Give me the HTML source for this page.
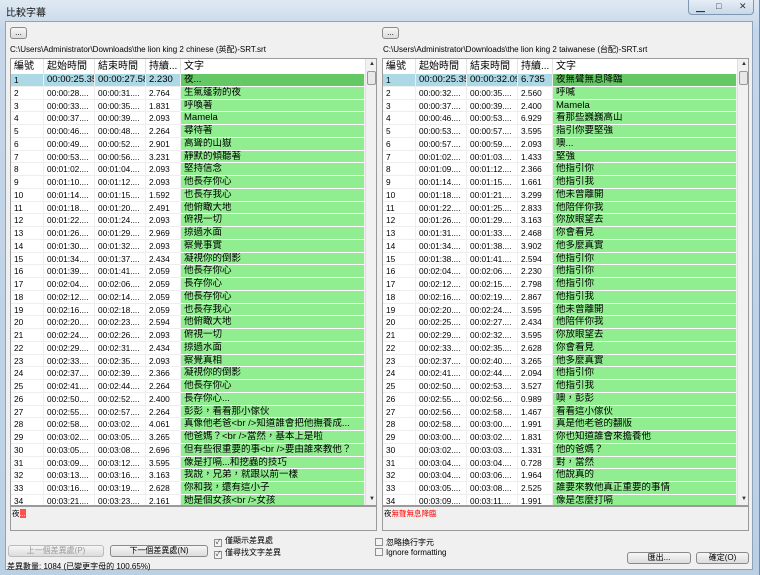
<!DOCTYPE html>
<html><head><meta charset="utf-8"><style>
*{box-sizing:border-box;margin:0;padding:0}
body{width:760px;height:575px;overflow:hidden;background:#9fb9d3;font-family:"Liberation Sans","Noto Sans CJK TC",sans-serif;position:relative}
.frame{position:absolute;left:0;top:0;width:760px;height:575px;background:linear-gradient(#dfe9f3,#c5d6e8 30px,#bcd0e4);border-right:1px solid #6b8db5}
.title{position:absolute;left:6px;top:4px;font-size:10px;color:#111}
.ctl{position:absolute;top:0;left:688px;width:66px;height:15px;border:1px solid #7f97b3;border-top:none;border-radius:0 0 4px 4px;background:linear-gradient(#e6eef7,#c9d8e8)}
.ctl span{position:absolute;top:1px;font-size:9px;color:#333}
.client{position:absolute;left:5px;top:21px;width:748px;height:549px;background:#f0f0f0;border:1px solid #8da2bb}
.btn{position:absolute;border:1px solid #8a8a8a;border-radius:3px;background:linear-gradient(#f6f6f6,#dcdcdc);font-size:8px;text-align:center;color:#000}
.path{position:absolute;font-size:8px;color:#000;white-space:nowrap}
.tbl{position:absolute;top:58px;height:448px;background:#fff;border:1px solid #9a9a9a;overflow:hidden}
.hdr{position:absolute;left:0;top:0;height:15px;font-size:10px;color:#000}
.hdr div{position:absolute;top:0;height:15px;line-height:15px;padding-left:3px;border-right:1px solid #e3e3e3}
.row{position:absolute;left:0;height:12.75px;font-size:8.3px;white-space:nowrap}
.row div{position:absolute;top:0;height:12.75px;line-height:12.75px;padding-left:3px;overflow:hidden;border-right:1px solid #eee;border-bottom:1px solid #eee}
.row .t{background:#90ee90;border-bottom:1px solid #fff;font-size:9.5px}
.row.sel div{background:#add8e6}
.row.sel .t{background:#64c864}
.sb{position:absolute;top:0;width:12px;height:446px;background:#f1f1f1;border-left:1px solid #e0e0e0}
.sb .th{position:absolute;left:1px;top:12px;width:9px;height:14px;border:1px solid #999;background:#e8e8e8;border-radius:2px}
.sb .a{position:absolute;left:3px;font-size:6px;color:#333}
.box{position:absolute;top:506px;height:25px;background:#f0f0f0;border:1px solid #9a9a9a;font-size:7.5px}
.chk{position:absolute;font-size:8px;white-space:nowrap}
.chk i{display:inline-block;width:8px;height:8px;border:1px solid #8e8f8f;background:#f4f4f4;vertical-align:-1px;margin-right:3px;font-style:normal;font-size:7px;line-height:6px;color:#333;text-align:center}
</style></head><body>
<div class="frame"></div>
<div class="title">比較字幕</div>
<div class="ctl"><span style="left:7px">▁</span><span style="left:27px">□</span><span style="left:50px">✕</span></div>
<div class="client"></div>
<div class="btn" style="left:10px;top:27px;width:17px;height:12px;line-height:9px">...</div>
<div class="btn" style="left:382px;top:27px;width:17px;height:12px;line-height:9px">...</div>
<div class="path" style="left:10px;top:44px">C:\Users\Administrator\Downloads\the lion king 2 chinese (英配)-SRT.srt</div>
<div class="path" style="left:383px;top:44px">C:\Users\Administrator\Downloads\the lion king 2 taiwanese (台配)-SRT.srt</div>

<div class="tbl" style="left:10px;width:367px">
<div class="hdr"><div style="left:0;width:33px">編號</div><div style="left:33px;width:51px">起始時間</div><div style="left:84px;width:51px">結束時間</div><div style="left:135px;width:35px">持續...</div><div style="left:170px;width:185px">文字</div></div>
<div id="L"></div>
<div class="sb" style="left:354px"><span class="a" style="top:2px">▲</span><div class="th"></div><span class="a" style="top:437px">▼</span></div>
</div>
<div class="tbl" style="left:382px;width:367px">
<div class="hdr"><div style="left:0;width:33px">編號</div><div style="left:33px;width:51px">起始時間</div><div style="left:84px;width:51px">結束時間</div><div style="left:135px;width:35px">持續...</div><div style="left:170px;width:185px">文字</div></div>
<div id="R"></div>
<div class="sb" style="left:354px"><span class="a" style="top:2px">▲</span><div class="th"></div><span class="a" style="top:437px">▼</span></div>
</div>

<div class="box" style="left:10px;width:367px"><span style="position:absolute;left:1px;top:1px">夜<span style="background:#ff5050;color:#fff">...</span></span></div>
<div class="box" style="left:382px;width:367px"><span style="position:absolute;left:1px;top:1px">夜<span style="color:#f00">無聲無息降臨</span></span></div>

<div class="chk" style="left:214px;top:535px"><i>✓</i>僅顯示差異處</div>
<div class="chk" style="left:214px;top:547px"><i>✓</i>僅尋找文字差異</div>
<div class="chk" style="left:375px;top:537px"><i></i>忽略換行字元</div>
<div class="chk" style="left:375px;top:548px"><i></i>Ignore formatting</div>
<div class="btn" style="left:8px;top:545px;width:96px;height:12px;line-height:10px;color:#999;border-color:#bbb">上一個差異處(P)</div>
<div class="btn" style="left:110px;top:545px;width:98px;height:12px;line-height:10px">下一個差異處(N)</div>
<div class="btn" style="left:627px;top:552px;width:64px;height:12px;line-height:10px">匯出...</div>
<div class="btn" style="left:696px;top:552px;width:53px;height:12px;line-height:10px">確定(O)</div>
<div class="path" style="left:7px;top:561px">差異數量: 1084 (已變更字母的 100.65%)</div>

<script>
var L=[["1","00:00:25.35","00:00:27.58","2.230","夜..."],["2","00:00:28....","00:00:31....","2.764","生氣蓬勃的夜"],["3","00:00:33....","00:00:35....","1.831","呼喚著"],["4","00:00:37....","00:00:39....","2.093","Mamela"],["5","00:00:46....","00:00:48....","2.264","尋待著"],["6","00:00:49....","00:00:52....","2.901","高聳的山嶽"],["7","00:00:53....","00:00:56....","3.231","靜默的傾聽著"],["8","00:01:02....","00:01:04....","2.093","堅持信念"],["9","00:01:10....","00:01:12....","2.093","他長存你心"],["10","00:01:14....","00:01:15....","1.592","也長存我心"],["11","00:01:18....","00:01:20....","2.491","他俯瞰大地"],["12","00:01:22....","00:01:24....","2.093","俯視一切"],["13","00:01:26....","00:01:29....","2.969","掠過水面"],["14","00:01:30....","00:01:32....","2.093","察覺事實"],["15","00:01:34....","00:01:37....","2.434","凝視你的倒影"],["16","00:01:39....","00:01:41....","2.059","他長存你心"],["17","00:02:04....","00:02:06....","2.059","長存你心"],["18","00:02:12....","00:02:14....","2.059","他長存你心"],["19","00:02:16....","00:02:18....","2.059","也長存我心"],["20","00:02:20....","00:02:23....","2.594","他俯瞰大地"],["21","00:02:24....","00:02:26....","2.093","俯視一切"],["22","00:02:29....","00:02:31....","2.434","掠過水面"],["23","00:02:33....","00:02:35....","2.093","察覺真相"],["24","00:02:37....","00:02:39....","2.366","凝視你的倒影"],["25","00:02:41....","00:02:44....","2.264","他長存你心"],["26","00:02:50....","00:02:52....","2.400","長存你心..."],["27","00:02:55....","00:02:57....","2.264","彭彭，看看那小傢伙"],["28","00:02:58....","00:03:02....","4.061","真像他老爸<br />知道誰會把他撫養成..."],["29","00:03:02....","00:03:05....","3.265","他爸媽？<br />當然，基本上是啦"],["30","00:03:05....","00:03:08....","2.696","但有些很重要的事<br />要由誰來教他？"],["31","00:03:09....","00:03:12....","3.595","像是打嗝...和挖蟲的技巧"],["32","00:03:13....","00:03:16....","3.163","我說，兄弟，就跟以前一樣"],["33","00:03:16....","00:03:19....","2.628","你和我，還有這小子"],["34","00:03:21....","00:03:23....","2.161","她是個女孩<br />女孩"]];
var R=[["1","00:00:25.35","00:00:32.09","6.735","夜無聲無息降臨"],["2","00:00:32....","00:00:35....","2.560","呼喊"],["3","00:00:37....","00:00:39....","2.400","Mamela"],["4","00:00:46....","00:00:53....","6.929","看那些巍巍高山"],["5","00:00:53....","00:00:57....","3.595","指引你要堅強"],["6","00:00:57....","00:00:59....","2.093","噢..."],["7","00:01:02....","00:01:03....","1.433","堅強"],["8","00:01:09....","00:01:12....","2.366","他指引你"],["9","00:01:14....","00:01:15....","1.661","他指引我"],["10","00:01:18....","00:01:21....","3.299","他未曾離開"],["11","00:01:22....","00:01:25....","2.833","他陪伴你我"],["12","00:01:26....","00:01:29....","3.163","你放眼望去"],["13","00:01:31....","00:01:33....","2.468","你會看見"],["14","00:01:34....","00:01:38....","3.902","他多麼真實"],["15","00:01:38....","00:01:41....","2.594","他指引你"],["16","00:02:04....","00:02:06....","2.230","他指引你"],["17","00:02:12....","00:02:15....","2.798","他指引你"],["18","00:02:16....","00:02:19....","2.867","他指引我"],["19","00:02:20....","00:02:24....","3.595","他未曾離開"],["20","00:02:25....","00:02:27....","2.434","他陪伴你我"],["21","00:02:29....","00:02:32....","3.595","你放眼望去"],["22","00:02:33....","00:02:35....","2.628","你會看見"],["23","00:02:37....","00:02:40....","3.265","他多麼真實"],["24","00:02:41....","00:02:44....","2.094","他指引你"],["25","00:02:50....","00:02:53....","3.527","他指引我"],["26","00:02:55....","00:02:56....","0.989","噢，彭彭"],["27","00:02:56....","00:02:58....","1.467","看看這小傢伙"],["28","00:02:58....","00:03:00....","1.991","真是他老爸的翻版"],["29","00:03:00....","00:03:02....","1.831","你也知道誰會來擔養他"],["30","00:03:02....","00:03:03....","1.331","他的爸媽？"],["31","00:03:04....","00:03:04....","0.728","對，當然"],["32","00:03:04....","00:03:06....","1.964","他說真的"],["33","00:03:05....","00:03:08....","2.525","誰要來教他真正重要的事情"],["34","00:03:09....","00:03:11....","1.991","像是怎麼打嗝"]];
function esc(s){return s.replace(/&/g,'&amp;').replace(/</g,'&lt;').replace(/>/g,'&gt;')}
function build(id,d){var h='',l=[0,33,84,135,170],w=[33,51,51,35,184];d.forEach(function(r,i){h+='<div class="row'+(i==0?' sel':'')+'" style="top:'+(15+i*12.75)+'px">';for(var c=0;c<5;c++)h+='<div class="'+(c==4?'t':'')+'" style="left:'+l[c]+'px;width:'+w[c]+'px;'+(i==0&&c>0&&c<4?'font-size:9.5px':'')+'">'+esc(r[c])+'</div>';h+='</div>'});document.getElementById(id).innerHTML=h}
build('L',L);build('R',R);
</script>
</body></html>
